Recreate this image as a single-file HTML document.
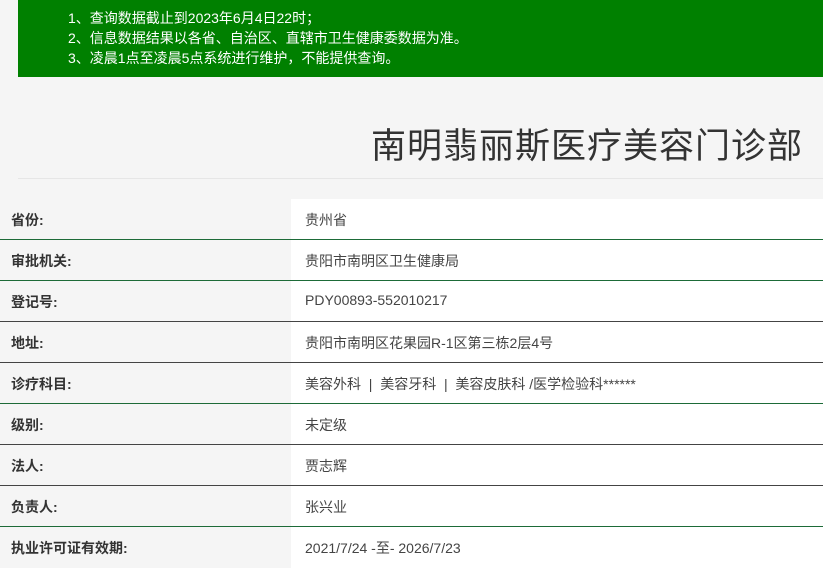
<!DOCTYPE html><html><head><meta charset="utf-8"><style>
body{margin:0;width:823px;height:563px;overflow:hidden;background:#f5f5f5;font-family:"Liberation Sans","Noto Sans CJK SC",sans-serif;position:relative}
.g{position:absolute;left:18px;top:0;width:805px;height:77px;background:#008000;color:#fff;font-size:14px;line-height:20px;padding-top:8px;box-sizing:border-box;padding-left:50px}
.t{position:absolute;right:20px;top:118px;font-size:35px;color:#333;letter-spacing:1px}
.hl{position:absolute;left:18px;right:0;top:178px;border-top:1px solid #e6e6e6}
.r{position:absolute;left:0;width:823px;height:41px;box-sizing:border-box;border-bottom:1px solid #1d6b38}
.r b{position:absolute;left:11px;top:11px;font-size:14px;color:#333}
.r span{position:absolute;left:291px;top:0;right:0;bottom:0;background:#fff;padding:11px 0 0 14px;font-size:14px;color:#444}
.d{border-bottom-color:#444}
</style></head><body>
<div class="g">1、查询数据截止到2023年6月4日22时；<br>2、信息数据结果以各省、自治区、直辖市卫生健康委数据为准。<br>3、凌晨1点至凌晨5点系统进行维护，不能提供查询。</div>
<div class="t">南明翡丽斯医疗美容门诊部</div>
<div class="hl"></div>
<div class="r" style="top:199px"><b>省份:</b><span>贵州省</span></div>
<div class="r" style="top:240px"><b>审批机关:</b><span>贵阳市南明区卫生健康局</span></div>
<div class="r d" style="top:281px"><b>登记号:</b><span>PDY00893-552010217</span></div>
<div class="r d" style="top:322px"><b>地址:</b><span>贵阳市南明区花果园R-1区第三栋2层4号</span></div>
<div class="r" style="top:363px"><b>诊疗科目:</b><span>美容外科 &nbsp;| &nbsp;美容牙科 &nbsp;| &nbsp;美容皮肤科 /医学检验科******</span></div>
<div class="r d" style="top:404px"><b>级别:</b><span>未定级</span></div>
<div class="r d" style="top:445px"><b>法人:</b><span>贾志辉</span></div>
<div class="r" style="top:486px"><b>负责人:</b><span>张兴业</span></div>
<div class="r" style="top:527px;border:none"><b>执业许可证有效期:</b><span>2021/7/24 -至- 2026/7/23</span></div>
</body></html>
